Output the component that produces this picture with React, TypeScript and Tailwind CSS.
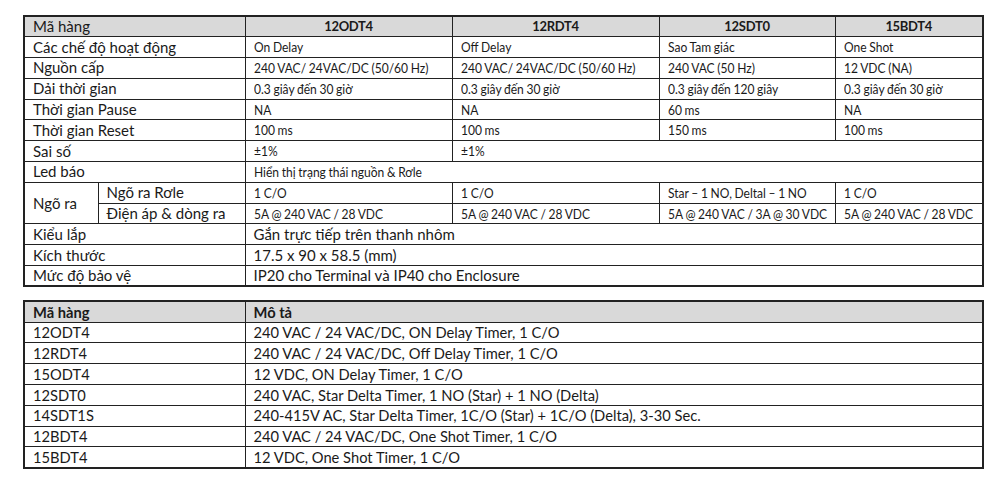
import React from 'react'

const spec: { label: string; cells: [string, number][] }[] = [
  { label: 'Các chế độ hoạt động', cells: [['On Delay', 1], ['Off Delay', 1], ['Sao Tam giác', 1], ['One Shot', 1]] },
  { label: 'Nguồn cấp', cells: [['240 VAC/ 24VAC/DC (50/60 Hz)', 1], ['240 VAC/ 24VAC/DC (50/60 Hz)', 1], ['240 VAC (50 Hz)', 1], ['12 VDC (NA)', 1]] },
  { label: 'Dải thời gian', cells: [['0.3 giây đến 30 giờ', 1], ['0.3 giây đến 30 giờ', 1], ['0.3 giây đến 120 giây', 1], ['0.3 giây đến 30 giờ', 1]] },
  { label: 'Thời gian Pause', cells: [['NA', 1], ['NA', 1], ['60 ms', 1], ['NA', 1]] },
  { label: 'Thời gian Reset', cells: [['100 ms', 1], ['100 ms', 1], ['150 ms', 1], ['100 ms', 1]] },
  { label: 'Sai số', cells: [['±1%', 1], ['±1%', 3]] },
  { label: 'Led báo', cells: [['Hiển thị trạng thái nguồn & Rơle', 4]] },
]

const models = [
  ['12ODT4', '240 VAC / 24 VAC/DC, ON Delay Timer, 1 C/O'],
  ['12RDT4', '240 VAC / 24 VAC/DC, Off Delay Timer, 1 C/O'],
  ['15ODT4', '12 VDC, ON Delay Timer, 1 C/O'],
  ['12SDT0', '240 VAC, Star Delta Timer, 1 NO (Star) + 1 NO (Delta)'],
  ['14SDT1S', '240-415V AC, Star Delta Timer, 1C/O (Star) + 1C/O (Delta), 3-30 Sec.'],
  ['12BDT4', '240 VAC / 24 VAC/DC, One Shot Timer, 1 C/O'],
  ['15BDT4', '12 VDC, One Shot Timer, 1 C/O'],
]

const td = 'border border-[#222] px-[8px] py-0 leading-none align-middle whitespace-nowrap overflow-hidden'
const big = 'text-[15px]'
const desc = 'text-[14.7px]'
const head = 'text-[13px] tracking-[-0.3px] font-bold text-center'

// data values in the spec sheet are set narrower than the labels
function Cell({ text, span = 1 }: { text: string; span?: number }) {
  return (
    <td colSpan={span} className={`${td} text-[14px]`}>
      <span className="inline-block origin-left scale-x-[0.86] [word-spacing:-0.5px]">{text}</span>
    </td>
  )
}

export default function App() {
  return (
    <div className="w-[1000px] h-[480px] bg-white pt-[15px] pl-[23px] text-[#1a1a1a]" style={{ fontFamily: 'Lato, "Open Sans", sans-serif' }}>
      <table className="table-fixed border-collapse border-2 border-[#222] w-[959px]">
        <colgroup>
          <col className="w-[74px]" />
          <col className="w-[147px]" />
          <col className="w-[207px]" />
          <col className="w-[207px]" />
          <col className="w-[176px]" />
          <col className="w-[148px]" />
        </colgroup>
        <tbody>
          <tr className="h-[20.8px] bg-[#d9d9d9]">
            <td colSpan={2} className={`${td} ${big}`}>Mã hàng</td>
            <td className={`${td} ${head}`}>12ODT4</td>
            <td className={`${td} ${head}`}>12RDT4</td>
            <td className={`${td} ${head}`}>12SDT0</td>
            <td className={`${td} ${head}`}>15BDT4</td>
          </tr>
          {spec.map((row) => (
            <tr key={row.label} className="h-[20.8px]">
              <td colSpan={2} className={`${td} ${big}`}>{row.label}</td>
              {row.cells.map(([text, span], i) => (
                <Cell key={i} text={text} span={span} />
              ))}
            </tr>
          ))}
          <tr className="h-[20.8px]">
            <td rowSpan={2} className={`${td} ${big}`}>Ngõ ra</td>
            <td className={`${td} ${big}`}>Ngõ ra Rơle</td>
            <Cell text="1 C/O" />
            <Cell text="1 C/O" />
            <Cell text="Star – 1 NO, Deltal – 1 NO" />
            <Cell text="1 C/O" />
          </tr>
          <tr className="h-[20.8px]">
            <td className={`${td} ${big}`}>Điện áp &amp; dòng ra</td>
            <Cell text="5A @ 240 VAC / 28 VDC" />
            <Cell text="5A @ 240 VAC / 28 VDC" />
            <Cell text="5A @ 240 VAC / 3A @ 30 VDC" />
            <Cell text="5A @ 240 VAC / 28 VDC" />
          </tr>
          <tr className="h-[20.8px]">
            <td colSpan={2} className={`${td} ${big}`}>Kiểu lắp</td>
            <td colSpan={4} className={`${td} ${big}`}>Gắn trực tiếp trên thanh nhôm</td>
          </tr>
          <tr className="h-[20.8px]">
            <td colSpan={2} className={`${td} ${big}`}>Kích thước</td>
            <td colSpan={4} className={`${td} ${big}`}>17.5 x 90 x 58.5 (mm)</td>
          </tr>
          <tr className="h-[20.8px]">
            <td colSpan={2} className={`${td} ${big}`}>Mức độ bảo vệ</td>
            <td colSpan={4} className={`${td} ${big}`}>IP20 cho Terminal và IP40 cho Enclosure</td>
          </tr>
        </tbody>
      </table>

      <table className="table-fixed border-collapse border-2 border-[#222] w-[959px] mt-[13px]">
        <colgroup>
          <col className="w-[221px]" />
          <col className="w-[738px]" />
        </colgroup>
        <tbody>
          <tr className="h-[20.8px] bg-[#d9d9d9]">
            <td className={`${td} ${desc} font-bold`}>Mã hàng</td>
            <td className={`${td} ${desc} font-bold`}>Mô tả</td>
          </tr>
          {models.map(([code, text]) => (
            <tr key={code} className="h-[20.8px]">
              <td className={`${td} ${desc}`}>{code}</td>
              <td className={`${td} ${desc}`}>{text}</td>
            </tr>
          ))}
        </tbody>
      </table>
    </div>
  )
}
